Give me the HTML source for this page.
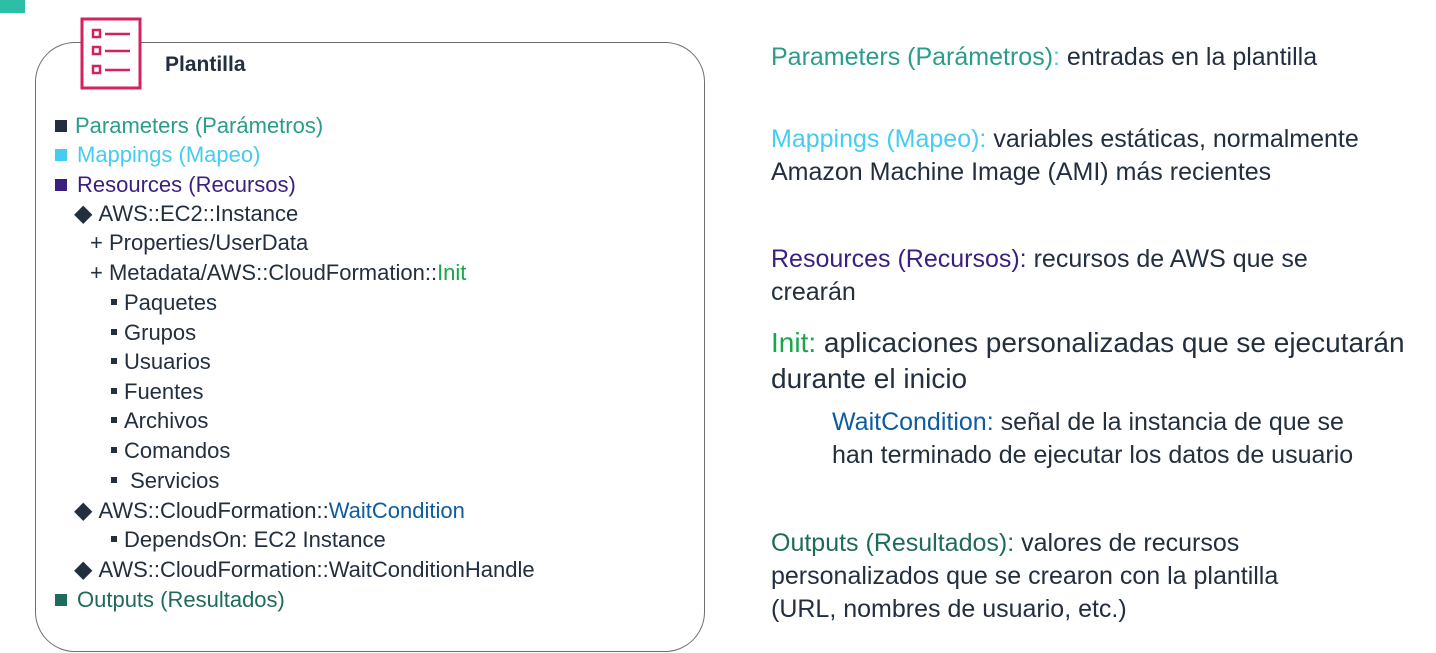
<!DOCTYPE html>
<html><head><meta charset="utf-8"><style>
body{margin:0;width:1436px;height:653px;background:#fff;position:relative;overflow:hidden;font-family:"Liberation Sans",sans-serif;color:#232f3e}
.l{position:absolute;white-space:nowrap;font-size:22px;line-height:24px}
.r{position:absolute;white-space:nowrap;font-size:25px;line-height:33px}
.sq{display:inline-block;width:12px;height:12px;margin-right:8px;vertical-align:1px}
.ss{display:inline-block;width:6px;height:6px;background:#232f3e;margin-right:7px;vertical-align:5px}
.d{display:inline-block;font-size:24px;margin-right:6px}
.t{color:#2a9d8a}.lb{color:#45ccf0}.pu{color:#3b1f80}.gr{color:#1aa64a}.bl{color:#0f5ba0}.ou{color:#1e6b5c}
</style></head><body>
<div style="position:absolute;left:0;top:0;width:25px;height:13px;background:#2bbfa7"></div>
<div style="position:absolute;left:35px;top:42px;width:668px;height:608px;border:1.5px solid #6b6f75;border-radius:40px"></div>
<svg style="position:absolute;left:78px;top:16px" width="68" height="76">
<rect x="4" y="3" width="58" height="69" fill="#fff" stroke="#d6215f" stroke-width="3"/>
<g fill="none" stroke="#d6215f" stroke-width="2.5">
<rect x="15" y="14" width="7" height="7"/><rect x="15" y="31" width="7" height="7"/><rect x="15" y="50" width="7" height="7"/>
<path d="M27 18H52M27 35H52M27 54H52"/></g></svg>
<div class="l" style="left:165px;top:53px;font-weight:bold;font-size:21px">Plantilla</div>
<div class="l t" style="left:55px;top:114px"><span class="sq" style="background:#232f3e"></span>Parameters (Parámetros)</div>
<div class="l lb" style="left:55px;top:143px"><span class="sq" style="background:#45ccf0;margin-right:10px"></span>Mappings (Mapeo)</div>
<div class="l pu" style="left:55px;top:173px"><span class="sq" style="background:#3b1f80;margin-right:10px"></span>Resources (Recursos)</div>
<div class="l" style="left:74px;top:202px"><span class="d">◆</span>AWS::EC2::Instance</div>
<div class="l" style="left:90px;top:231px">+ Properties/UserData</div>
<div class="l" style="left:90px;top:261px">+ Metadata/AWS::CloudFormation::<span class="gr">Init</span></div>
<div class="l" style="left:111px;top:291px"><span class="ss"></span>Paquetes</div>
<div class="l" style="left:111px;top:321px"><span class="ss"></span>Grupos</div>
<div class="l" style="left:111px;top:350px"><span class="ss"></span>Usuarios</div>
<div class="l" style="left:111px;top:380px"><span class="ss"></span>Fuentes</div>
<div class="l" style="left:111px;top:409px"><span class="ss"></span>Archivos</div>
<div class="l" style="left:111px;top:439px"><span class="ss"></span>Comandos</div>
<div class="l" style="left:111px;top:469px"><span class="ss"></span> Servicios</div>
<div class="l" style="left:74px;top:499px"><span class="d">◆</span>AWS::CloudFormation::<span class="bl">WaitCondition</span></div>
<div class="l" style="left:111px;top:528px"><span class="ss"></span>DependsOn: EC2 Instance</div>
<div class="l" style="left:74px;top:558px"><span class="d">◆</span>AWS::CloudFormation::WaitConditionHandle</div>
<div class="l ou" style="left:55px;top:588px"><span class="sq" style="background:#1e6b5c;margin-right:10px"></span>Outputs (Resultados)</div>

<div class="r" style="left:771px;top:41px"><span class="t">Parameters (Parámetros)</span><span class="lb">:</span> entradas en la plantilla</div>
<div class="r" style="left:771px;top:123px"><span class="lb">Mappings (Mapeo):</span> variables estáticas, normalmente<br>Amazon Machine Image (AMI) más recientes</div>
<div class="r" style="left:771px;top:243px"><span class="pu">Resources (Recursos):</span> recursos de AWS que se<br>crearán</div>
<div class="r" style="left:771px;top:325px;font-size:28px;line-height:36px"><span class="gr">Init:</span> aplicaciones personalizadas que se ejecutarán<br>durante el inicio</div>
<div class="r" style="left:832px;top:406px"><span class="bl">WaitCondition:</span> señal de la instancia de que se<br>han terminado de ejecutar los datos de usuario</div>
<div class="r" style="left:771px;top:527px"><span class="ou">Outputs (Resultados):</span> valores de recursos<br>personalizados que se crearon con la plantilla<br>(URL, nombres de usuario, etc.)</div>
</body></html>
